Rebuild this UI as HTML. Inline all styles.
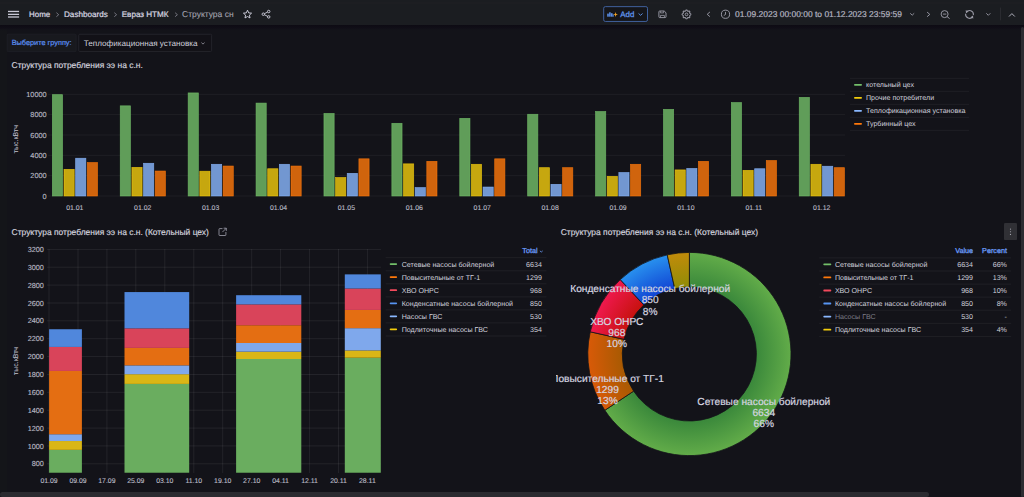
<!DOCTYPE html>
<html><head><meta charset="utf-8"><style>
html,body{margin:0;padding:0;width:1024px;height:497px;overflow:hidden;background:#131319;font-family:"Liberation Sans", sans-serif;}
.abs{position:absolute}
#top{position:absolute;left:0;top:0;width:1024px;height:25px;background:#1c1d21;}
</style></head><body>
<div class="abs" style="left:0;top:25px;width:7px;height:472px;background:#141519"></div>
<svg class="abs" style="left:0;top:0" width="1024" height="497" font-family='"Liberation Sans", sans-serif' text-rendering="geometricPrecision">
<defs><radialGradient id="g0" gradientUnits="userSpaceOnUse" cx="689.4" cy="354.0" r="101.6"><stop offset="0.659" stop-color="#3a883b"/><stop offset="1" stop-color="#62ac49"/></radialGradient><radialGradient id="g1" gradientUnits="userSpaceOnUse" cx="689.4" cy="354.0" r="101.6"><stop offset="0.659" stop-color="#a85a02"/><stop offset="1" stop-color="#d85a08"/></radialGradient><radialGradient id="g2" gradientUnits="userSpaceOnUse" cx="689.4" cy="354.0" r="101.6"><stop offset="0.659" stop-color="#c7120e"/><stop offset="1" stop-color="#ef194e"/></radialGradient><radialGradient id="g3" gradientUnits="userSpaceOnUse" cx="689.4" cy="354.0" r="101.6"><stop offset="0.659" stop-color="#1043d3"/><stop offset="1" stop-color="#2890ee"/></radialGradient><radialGradient id="g4" gradientUnits="userSpaceOnUse" cx="689.4" cy="354.0" r="101.6"><stop offset="0.659" stop-color="#918c07"/><stop offset="1" stop-color="#c18b0a"/></radialGradient><linearGradient id="shadowTop" x1="0" y1="0" x2="0" y2="1"><stop offset="0" stop-color="#0d0b13"/><stop offset="0.5" stop-color="#100e17"/><stop offset="1" stop-color="#131319" stop-opacity="0"/></linearGradient><clipPath id="clip3"><rect x="556" y="240" width="284" height="250"/></clipPath></defs>
<line x1="48" y1="196.0" x2="845" y2="196.0" stroke="#ffffff" stroke-opacity="0.05" stroke-width="1"/>
<text x="46.6" y="198.6" text-anchor="end" font-size="7.3" fill="#b9b9c4" stroke="#b9b9c4" stroke-width="0.12">0</text>
<line x1="48" y1="175.7" x2="845" y2="175.7" stroke="#ffffff" stroke-opacity="0.05" stroke-width="1"/>
<text x="46.6" y="178.3" text-anchor="end" font-size="7.3" fill="#b9b9c4" stroke="#b9b9c4" stroke-width="0.12">2000</text>
<line x1="48" y1="155.3" x2="845" y2="155.3" stroke="#ffffff" stroke-opacity="0.05" stroke-width="1"/>
<text x="46.6" y="157.9" text-anchor="end" font-size="7.3" fill="#b9b9c4" stroke="#b9b9c4" stroke-width="0.12">4000</text>
<line x1="48" y1="135.0" x2="845" y2="135.0" stroke="#ffffff" stroke-opacity="0.05" stroke-width="1"/>
<text x="46.6" y="137.6" text-anchor="end" font-size="7.3" fill="#b9b9c4" stroke="#b9b9c4" stroke-width="0.12">6000</text>
<line x1="48" y1="114.6" x2="845" y2="114.6" stroke="#ffffff" stroke-opacity="0.05" stroke-width="1"/>
<text x="46.6" y="117.2" text-anchor="end" font-size="7.3" fill="#b9b9c4" stroke="#b9b9c4" stroke-width="0.12">8000</text>
<line x1="48" y1="94.3" x2="845" y2="94.3" stroke="#ffffff" stroke-opacity="0.05" stroke-width="1"/>
<text x="46.6" y="96.9" text-anchor="end" font-size="7.3" fill="#b9b9c4" stroke="#b9b9c4" stroke-width="0.12">10000</text>
<text transform="translate(17.8,139.2) rotate(-90)" text-anchor="middle" font-size="7.0" fill="#b9b9c4" stroke="#b9b9c4" stroke-width="0.1">тыс.кВтч</text>
<rect x="52.35" y="94.65" width="10.2" height="101.35" fill="#609d59" stroke="#73bf69" stroke-width="0.7" stroke-opacity="0.8"/>
<rect x="64.00" y="169.35" width="10.2" height="26.65" fill="#c6a70f" stroke="#f2cc0c" stroke-width="0.7" stroke-opacity="0.8"/>
<rect x="75.65" y="158.25" width="10.2" height="37.75" fill="#7297d1" stroke="#8ab8ff" stroke-width="0.7" stroke-opacity="0.8"/>
<rect x="87.30" y="162.56" width="10.2" height="33.44" fill="#d0640d" stroke="#ff780a" stroke-width="0.7" stroke-opacity="0.8"/>
<text x="74.8" y="209.8" text-anchor="middle" font-size="6.9" fill="#b9b9c4" stroke="#b9b9c4" stroke-width="0.12">01.01</text>
<rect x="120.25" y="105.84" width="10.2" height="90.16" fill="#609d59" stroke="#73bf69" stroke-width="0.7" stroke-opacity="0.8"/>
<rect x="131.90" y="167.37" width="10.2" height="28.63" fill="#c6a70f" stroke="#f2cc0c" stroke-width="0.7" stroke-opacity="0.8"/>
<rect x="143.55" y="163.30" width="10.2" height="32.70" fill="#7297d1" stroke="#8ab8ff" stroke-width="0.7" stroke-opacity="0.8"/>
<rect x="155.20" y="171.03" width="10.2" height="24.97" fill="#d0640d" stroke="#ff780a" stroke-width="0.7" stroke-opacity="0.8"/>
<text x="142.7" y="209.8" text-anchor="middle" font-size="6.9" fill="#b9b9c4" stroke="#b9b9c4" stroke-width="0.12">01.02</text>
<rect x="188.15" y="92.92" width="10.2" height="103.08" fill="#609d59" stroke="#73bf69" stroke-width="0.7" stroke-opacity="0.8"/>
<rect x="199.80" y="171.23" width="10.2" height="24.77" fill="#c6a70f" stroke="#f2cc0c" stroke-width="0.7" stroke-opacity="0.8"/>
<rect x="211.45" y="164.31" width="10.2" height="31.69" fill="#7297d1" stroke="#8ab8ff" stroke-width="0.7" stroke-opacity="0.8"/>
<rect x="223.10" y="166.04" width="10.2" height="29.96" fill="#d0640d" stroke="#ff780a" stroke-width="0.7" stroke-opacity="0.8"/>
<text x="210.6" y="209.8" text-anchor="middle" font-size="6.9" fill="#b9b9c4" stroke="#b9b9c4" stroke-width="0.12">01.03</text>
<rect x="256.05" y="103.09" width="10.2" height="92.91" fill="#609d59" stroke="#73bf69" stroke-width="0.7" stroke-opacity="0.8"/>
<rect x="267.70" y="168.74" width="10.2" height="27.26" fill="#c6a70f" stroke="#f2cc0c" stroke-width="0.7" stroke-opacity="0.8"/>
<rect x="279.35" y="164.31" width="10.2" height="31.69" fill="#7297d1" stroke="#8ab8ff" stroke-width="0.7" stroke-opacity="0.8"/>
<rect x="291.00" y="166.04" width="10.2" height="29.96" fill="#d0640d" stroke="#ff780a" stroke-width="0.7" stroke-opacity="0.8"/>
<text x="278.5" y="209.8" text-anchor="middle" font-size="6.9" fill="#b9b9c4" stroke="#b9b9c4" stroke-width="0.12">01.04</text>
<rect x="323.95" y="113.46" width="10.2" height="82.54" fill="#609d59" stroke="#73bf69" stroke-width="0.7" stroke-opacity="0.8"/>
<rect x="335.60" y="177.54" width="10.2" height="18.46" fill="#c6a70f" stroke="#f2cc0c" stroke-width="0.7" stroke-opacity="0.8"/>
<rect x="347.25" y="173.37" width="10.2" height="22.63" fill="#7297d1" stroke="#8ab8ff" stroke-width="0.7" stroke-opacity="0.8"/>
<rect x="358.90" y="158.82" width="10.2" height="37.18" fill="#d0640d" stroke="#ff780a" stroke-width="0.7" stroke-opacity="0.8"/>
<text x="346.4" y="209.8" text-anchor="middle" font-size="6.9" fill="#b9b9c4" stroke="#b9b9c4" stroke-width="0.12">01.05</text>
<rect x="391.85" y="123.33" width="10.2" height="72.67" fill="#609d59" stroke="#73bf69" stroke-width="0.7" stroke-opacity="0.8"/>
<rect x="403.50" y="163.86" width="10.2" height="32.14" fill="#c6a70f" stroke="#f2cc0c" stroke-width="0.7" stroke-opacity="0.8"/>
<rect x="415.15" y="187.60" width="10.2" height="8.40" fill="#7297d1" stroke="#8ab8ff" stroke-width="0.7" stroke-opacity="0.8"/>
<rect x="426.80" y="161.37" width="10.2" height="34.63" fill="#d0640d" stroke="#ff780a" stroke-width="0.7" stroke-opacity="0.8"/>
<text x="414.3" y="209.8" text-anchor="middle" font-size="6.9" fill="#b9b9c4" stroke="#b9b9c4" stroke-width="0.12">01.06</text>
<rect x="459.75" y="118.35" width="10.2" height="77.65" fill="#609d59" stroke="#73bf69" stroke-width="0.7" stroke-opacity="0.8"/>
<rect x="471.40" y="164.31" width="10.2" height="31.69" fill="#c6a70f" stroke="#f2cc0c" stroke-width="0.7" stroke-opacity="0.8"/>
<rect x="483.05" y="187.04" width="10.2" height="8.96" fill="#7297d1" stroke="#8ab8ff" stroke-width="0.7" stroke-opacity="0.8"/>
<rect x="494.70" y="158.82" width="10.2" height="37.18" fill="#d0640d" stroke="#ff780a" stroke-width="0.7" stroke-opacity="0.8"/>
<text x="482.2" y="209.8" text-anchor="middle" font-size="6.9" fill="#b9b9c4" stroke="#b9b9c4" stroke-width="0.12">01.07</text>
<rect x="527.65" y="114.28" width="10.2" height="81.72" fill="#609d59" stroke="#73bf69" stroke-width="0.7" stroke-opacity="0.8"/>
<rect x="539.30" y="167.67" width="10.2" height="28.33" fill="#c6a70f" stroke="#f2cc0c" stroke-width="0.7" stroke-opacity="0.8"/>
<rect x="550.95" y="184.35" width="10.2" height="11.65" fill="#7297d1" stroke="#8ab8ff" stroke-width="0.7" stroke-opacity="0.8"/>
<rect x="562.60" y="167.67" width="10.2" height="28.33" fill="#d0640d" stroke="#ff780a" stroke-width="0.7" stroke-opacity="0.8"/>
<text x="550.1" y="209.8" text-anchor="middle" font-size="6.9" fill="#b9b9c4" stroke="#b9b9c4" stroke-width="0.12">01.08</text>
<rect x="595.55" y="111.53" width="10.2" height="84.47" fill="#609d59" stroke="#73bf69" stroke-width="0.7" stroke-opacity="0.8"/>
<rect x="607.20" y="176.37" width="10.2" height="19.63" fill="#c6a70f" stroke="#f2cc0c" stroke-width="0.7" stroke-opacity="0.8"/>
<rect x="618.85" y="172.55" width="10.2" height="23.45" fill="#7297d1" stroke="#8ab8ff" stroke-width="0.7" stroke-opacity="0.8"/>
<rect x="630.50" y="164.31" width="10.2" height="31.69" fill="#d0640d" stroke="#ff780a" stroke-width="0.7" stroke-opacity="0.8"/>
<text x="618.0" y="209.8" text-anchor="middle" font-size="6.9" fill="#b9b9c4" stroke="#b9b9c4" stroke-width="0.12">01.09</text>
<rect x="663.45" y="109.40" width="10.2" height="86.60" fill="#609d59" stroke="#73bf69" stroke-width="0.7" stroke-opacity="0.8"/>
<rect x="675.10" y="169.91" width="10.2" height="26.09" fill="#c6a70f" stroke="#f2cc0c" stroke-width="0.7" stroke-opacity="0.8"/>
<rect x="686.75" y="168.48" width="10.2" height="27.52" fill="#7297d1" stroke="#8ab8ff" stroke-width="0.7" stroke-opacity="0.8"/>
<rect x="698.40" y="161.37" width="10.2" height="34.63" fill="#d0640d" stroke="#ff780a" stroke-width="0.7" stroke-opacity="0.8"/>
<text x="685.9" y="209.8" text-anchor="middle" font-size="6.9" fill="#b9b9c4" stroke="#b9b9c4" stroke-width="0.12">01.10</text>
<rect x="731.35" y="102.58" width="10.2" height="93.42" fill="#609d59" stroke="#73bf69" stroke-width="0.7" stroke-opacity="0.8"/>
<rect x="743.00" y="170.37" width="10.2" height="25.63" fill="#c6a70f" stroke="#f2cc0c" stroke-width="0.7" stroke-opacity="0.8"/>
<rect x="754.65" y="168.74" width="10.2" height="27.26" fill="#7297d1" stroke="#8ab8ff" stroke-width="0.7" stroke-opacity="0.8"/>
<rect x="766.30" y="160.55" width="10.2" height="35.45" fill="#d0640d" stroke="#ff780a" stroke-width="0.7" stroke-opacity="0.8"/>
<text x="753.8" y="209.8" text-anchor="middle" font-size="6.9" fill="#b9b9c4" stroke="#b9b9c4" stroke-width="0.12">01.11</text>
<rect x="799.25" y="97.40" width="10.2" height="98.60" fill="#609d59" stroke="#73bf69" stroke-width="0.7" stroke-opacity="0.8"/>
<rect x="810.90" y="164.31" width="10.2" height="31.69" fill="#c6a70f" stroke="#f2cc0c" stroke-width="0.7" stroke-opacity="0.8"/>
<rect x="822.55" y="166.25" width="10.2" height="29.75" fill="#7297d1" stroke="#8ab8ff" stroke-width="0.7" stroke-opacity="0.8"/>
<rect x="834.20" y="167.67" width="10.2" height="28.33" fill="#d0640d" stroke="#ff780a" stroke-width="0.7" stroke-opacity="0.8"/>
<text x="821.7" y="209.8" text-anchor="middle" font-size="6.9" fill="#b9b9c4" stroke="#b9b9c4" stroke-width="0.12">01.12</text>
<line x1="850" y1="78.3" x2="969" y2="78.3" stroke="#ffffff" stroke-opacity="0.05"/>
<rect x="854" y="83.9" width="8" height="1.8" rx="0.9" fill="#73bf69"/>
<text x="866" y="87.3" font-size="7.1" fill="#d0d0dc">котельный цех</text>
<line x1="850" y1="91.3" x2="969" y2="91.3" stroke="#ffffff" stroke-opacity="0.05"/>
<rect x="854" y="96.9" width="8" height="1.8" rx="0.9" fill="#f2cc0c"/>
<text x="866" y="100.3" font-size="7.1" fill="#d0d0dc">Прочие потребители</text>
<line x1="850" y1="104.3" x2="969" y2="104.3" stroke="#ffffff" stroke-opacity="0.05"/>
<rect x="854" y="109.9" width="8" height="1.8" rx="0.9" fill="#8ab8ff"/>
<text x="866" y="113.3" font-size="7.1" fill="#d0d0dc">Теплофикационная установка</text>
<line x1="850" y1="117.3" x2="969" y2="117.3" stroke="#ffffff" stroke-opacity="0.05"/>
<rect x="854" y="122.9" width="8" height="1.8" rx="0.9" fill="#ff780a"/>
<text x="866" y="126.3" font-size="7.1" fill="#d0d0dc">Турбинный цех</text>
<line x1="850" y1="130.3" x2="969" y2="130.3" stroke="#ffffff" stroke-opacity="0.05"/>
<line x1="47" y1="463.8" x2="381" y2="463.8" stroke="#ffffff" stroke-opacity="0.07"/>
<text x="43.9" y="466.4" text-anchor="end" font-size="7.3" fill="#b9b9c4" stroke="#b9b9c4" stroke-width="0.12">800</text>
<line x1="47" y1="445.9" x2="381" y2="445.9" stroke="#ffffff" stroke-opacity="0.07"/>
<text x="43.9" y="448.5" text-anchor="end" font-size="7.3" fill="#b9b9c4" stroke="#b9b9c4" stroke-width="0.12">1000</text>
<line x1="47" y1="428.1" x2="381" y2="428.1" stroke="#ffffff" stroke-opacity="0.07"/>
<text x="43.9" y="430.7" text-anchor="end" font-size="7.3" fill="#b9b9c4" stroke="#b9b9c4" stroke-width="0.12">1200</text>
<line x1="47" y1="410.2" x2="381" y2="410.2" stroke="#ffffff" stroke-opacity="0.07"/>
<text x="43.9" y="412.8" text-anchor="end" font-size="7.3" fill="#b9b9c4" stroke="#b9b9c4" stroke-width="0.12">1400</text>
<line x1="47" y1="392.3" x2="381" y2="392.3" stroke="#ffffff" stroke-opacity="0.07"/>
<text x="43.9" y="394.9" text-anchor="end" font-size="7.3" fill="#b9b9c4" stroke="#b9b9c4" stroke-width="0.12">1600</text>
<line x1="47" y1="374.5" x2="381" y2="374.5" stroke="#ffffff" stroke-opacity="0.07"/>
<text x="43.9" y="377.1" text-anchor="end" font-size="7.3" fill="#b9b9c4" stroke="#b9b9c4" stroke-width="0.12">1800</text>
<line x1="47" y1="356.6" x2="381" y2="356.6" stroke="#ffffff" stroke-opacity="0.07"/>
<text x="43.9" y="359.2" text-anchor="end" font-size="7.3" fill="#b9b9c4" stroke="#b9b9c4" stroke-width="0.12">2000</text>
<line x1="47" y1="338.7" x2="381" y2="338.7" stroke="#ffffff" stroke-opacity="0.07"/>
<text x="43.9" y="341.3" text-anchor="end" font-size="7.3" fill="#b9b9c4" stroke="#b9b9c4" stroke-width="0.12">2200</text>
<line x1="47" y1="320.8" x2="381" y2="320.8" stroke="#ffffff" stroke-opacity="0.07"/>
<text x="43.9" y="323.4" text-anchor="end" font-size="7.3" fill="#b9b9c4" stroke="#b9b9c4" stroke-width="0.12">2400</text>
<line x1="47" y1="303.0" x2="381" y2="303.0" stroke="#ffffff" stroke-opacity="0.07"/>
<text x="43.9" y="305.6" text-anchor="end" font-size="7.3" fill="#b9b9c4" stroke="#b9b9c4" stroke-width="0.12">2600</text>
<line x1="47" y1="285.1" x2="381" y2="285.1" stroke="#ffffff" stroke-opacity="0.07"/>
<text x="43.9" y="287.7" text-anchor="end" font-size="7.3" fill="#b9b9c4" stroke="#b9b9c4" stroke-width="0.12">2800</text>
<line x1="47" y1="267.2" x2="381" y2="267.2" stroke="#ffffff" stroke-opacity="0.07"/>
<text x="43.9" y="269.8" text-anchor="end" font-size="7.3" fill="#b9b9c4" stroke="#b9b9c4" stroke-width="0.12">3000</text>
<line x1="47" y1="249.4" x2="381" y2="249.4" stroke="#ffffff" stroke-opacity="0.07"/>
<text x="43.9" y="252.0" text-anchor="end" font-size="7.3" fill="#b9b9c4" stroke="#b9b9c4" stroke-width="0.12">3200</text>
<line x1="49.0" y1="249" x2="49.0" y2="473" stroke="#ffffff" stroke-opacity="0.07"/>
<line x1="78.0" y1="249" x2="78.0" y2="473" stroke="#ffffff" stroke-opacity="0.07"/>
<line x1="106.9" y1="249" x2="106.9" y2="473" stroke="#ffffff" stroke-opacity="0.07"/>
<line x1="135.8" y1="249" x2="135.8" y2="473" stroke="#ffffff" stroke-opacity="0.07"/>
<line x1="164.8" y1="249" x2="164.8" y2="473" stroke="#ffffff" stroke-opacity="0.07"/>
<line x1="193.8" y1="249" x2="193.8" y2="473" stroke="#ffffff" stroke-opacity="0.07"/>
<line x1="222.7" y1="249" x2="222.7" y2="473" stroke="#ffffff" stroke-opacity="0.07"/>
<line x1="251.7" y1="249" x2="251.7" y2="473" stroke="#ffffff" stroke-opacity="0.07"/>
<line x1="280.6" y1="249" x2="280.6" y2="473" stroke="#ffffff" stroke-opacity="0.07"/>
<line x1="309.6" y1="249" x2="309.6" y2="473" stroke="#ffffff" stroke-opacity="0.07"/>
<line x1="338.5" y1="249" x2="338.5" y2="473" stroke="#ffffff" stroke-opacity="0.07"/>
<line x1="367.4" y1="249" x2="367.4" y2="473" stroke="#ffffff" stroke-opacity="0.07"/>
<text transform="translate(17.8,361) rotate(-90)" text-anchor="middle" font-size="7.0" fill="#b9b9c4" stroke="#b9b9c4" stroke-width="0.1">тыс.кВтч</text>
<rect x="49.1" y="449.86" width="32.8" height="22.87" fill="#6aad5f"/>
<rect x="49.1" y="441.02" width="32.8" height="8.85" fill="#dab616"/>
<rect x="49.1" y="434.23" width="32.8" height="6.79" fill="#7fa8ec"/>
<rect x="49.1" y="370.97" width="32.8" height="63.26" fill="#e46e12"/>
<rect x="49.1" y="346.93" width="32.8" height="24.04" fill="#d9445a"/>
<rect x="49.1" y="329.24" width="32.8" height="17.69" fill="#5087dc"/>
<rect x="124.5" y="383.92" width="64.7" height="88.81" fill="#6aad5f"/>
<rect x="124.5" y="374.18" width="64.7" height="9.74" fill="#dab616"/>
<rect x="124.5" y="365.34" width="64.7" height="8.85" fill="#7fa8ec"/>
<rect x="124.5" y="347.91" width="64.7" height="17.42" fill="#e46e12"/>
<rect x="124.5" y="328.35" width="64.7" height="19.57" fill="#d9445a"/>
<rect x="124.5" y="292.07" width="64.7" height="36.28" fill="#5087dc"/>
<rect x="236.1" y="358.99" width="65.2" height="113.74" fill="#6aad5f"/>
<rect x="236.1" y="351.67" width="65.2" height="7.33" fill="#dab616"/>
<rect x="236.1" y="343.00" width="65.2" height="8.67" fill="#7fa8ec"/>
<rect x="236.1" y="325.22" width="65.2" height="17.78" fill="#e46e12"/>
<rect x="236.1" y="304.40" width="65.2" height="20.82" fill="#d9445a"/>
<rect x="236.1" y="295.20" width="65.2" height="9.20" fill="#5087dc"/>
<rect x="344.8" y="357.74" width="36.0" height="114.99" fill="#6aad5f"/>
<rect x="344.8" y="350.41" width="36.0" height="7.33" fill="#dab616"/>
<rect x="344.8" y="328.17" width="36.0" height="22.25" fill="#7fa8ec"/>
<rect x="344.8" y="309.94" width="36.0" height="18.23" fill="#e46e12"/>
<rect x="344.8" y="288.50" width="36.0" height="21.44" fill="#d9445a"/>
<rect x="344.8" y="274.38" width="36.0" height="14.12" fill="#5087dc"/>
<text x="49.0" y="483.2" text-anchor="middle" font-size="6.9" fill="#b9b9c4" stroke="#b9b9c4" stroke-width="0.12">01.09</text>
<text x="78.0" y="483.2" text-anchor="middle" font-size="6.9" fill="#b9b9c4" stroke="#b9b9c4" stroke-width="0.12">09.09</text>
<text x="106.9" y="483.2" text-anchor="middle" font-size="6.9" fill="#b9b9c4" stroke="#b9b9c4" stroke-width="0.12">17.09</text>
<text x="135.8" y="483.2" text-anchor="middle" font-size="6.9" fill="#b9b9c4" stroke="#b9b9c4" stroke-width="0.12">25.09</text>
<text x="164.8" y="483.2" text-anchor="middle" font-size="6.9" fill="#b9b9c4" stroke="#b9b9c4" stroke-width="0.12">03.10</text>
<text x="193.8" y="483.2" text-anchor="middle" font-size="6.9" fill="#b9b9c4" stroke="#b9b9c4" stroke-width="0.12">11.10</text>
<text x="222.7" y="483.2" text-anchor="middle" font-size="6.9" fill="#b9b9c4" stroke="#b9b9c4" stroke-width="0.12">19.10</text>
<text x="251.7" y="483.2" text-anchor="middle" font-size="6.9" fill="#b9b9c4" stroke="#b9b9c4" stroke-width="0.12">27.10</text>
<text x="280.6" y="483.2" text-anchor="middle" font-size="6.9" fill="#b9b9c4" stroke="#b9b9c4" stroke-width="0.12">04.11</text>
<text x="309.6" y="483.2" text-anchor="middle" font-size="6.9" fill="#b9b9c4" stroke="#b9b9c4" stroke-width="0.12">12.11</text>
<text x="338.5" y="483.2" text-anchor="middle" font-size="6.9" fill="#b9b9c4" stroke="#b9b9c4" stroke-width="0.12">20.11</text>
<text x="367.4" y="483.2" text-anchor="middle" font-size="6.9" fill="#b9b9c4" stroke="#b9b9c4" stroke-width="0.12">28.11</text>
<text x="537.5" y="253" text-anchor="end" font-size="7.2" fill="#6a9af8" stroke="#6a9af8" stroke-width="0.3">Total</text><path d="M539.9,250.9 L541.3,252 L542.7,250.9" fill="none" stroke="#6a9af8" stroke-width="0.8"/>
<line x1="385.6" y1="257.7" x2="546.5" y2="257.7" stroke="#ffffff" stroke-opacity="0.055"/>
<rect x="389.7" y="263.2" width="7.4" height="1.8" rx="0.9" fill="#73bf69"/>
<text x="401.7" y="266.7" font-size="7.1" fill="#d0d0dc">Сетевые насосы бойлерной</text>
<text x="541.9" y="266.7" text-anchor="end" font-size="7.1" fill="#d0d0dc">6634</text>
<line x1="385.6" y1="270.8" x2="546.5" y2="270.8" stroke="#ffffff" stroke-opacity="0.055"/>
<rect x="389.7" y="276.2" width="7.4" height="1.8" rx="0.9" fill="#ff780a"/>
<text x="401.7" y="279.8" font-size="7.1" fill="#d0d0dc">Повысительные от ТГ-1</text>
<text x="541.9" y="279.8" text-anchor="end" font-size="7.1" fill="#d0d0dc">1299</text>
<line x1="385.6" y1="283.8" x2="546.5" y2="283.8" stroke="#ffffff" stroke-opacity="0.055"/>
<rect x="389.7" y="289.3" width="7.4" height="1.8" rx="0.9" fill="#f2495c"/>
<text x="401.7" y="292.8" font-size="7.1" fill="#d0d0dc">ХВО ОНРС</text>
<text x="541.9" y="292.8" text-anchor="end" font-size="7.1" fill="#d0d0dc">968</text>
<line x1="385.6" y1="296.9" x2="546.5" y2="296.9" stroke="#ffffff" stroke-opacity="0.055"/>
<rect x="389.7" y="302.4" width="7.4" height="1.8" rx="0.9" fill="#5794f2"/>
<text x="401.7" y="305.9" font-size="7.1" fill="#d0d0dc">Конденсатные насосы бойлерной</text>
<text x="541.9" y="305.9" text-anchor="end" font-size="7.1" fill="#d0d0dc">850</text>
<line x1="385.6" y1="309.9" x2="546.5" y2="309.9" stroke="#ffffff" stroke-opacity="0.055"/>
<rect x="389.7" y="315.4" width="7.4" height="1.8" rx="0.9" fill="#8ab8ff"/>
<text x="401.7" y="318.9" font-size="7.1" fill="#d0d0dc">Насосы ГВС</text>
<text x="541.9" y="318.9" text-anchor="end" font-size="7.1" fill="#d0d0dc">530</text>
<line x1="385.6" y1="322.9" x2="546.5" y2="322.9" stroke="#ffffff" stroke-opacity="0.055"/>
<rect x="389.7" y="328.4" width="7.4" height="1.8" rx="0.9" fill="#f2cc0c"/>
<text x="401.7" y="331.9" font-size="7.1" fill="#d0d0dc">Подлиточные насосы ГВС</text>
<text x="541.9" y="331.9" text-anchor="end" font-size="7.1" fill="#d0d0dc">354</text>
<line x1="385.6" y1="336" x2="546.5" y2="336" stroke="#ffffff" stroke-opacity="0.055"/>
<path d="M689.40,252.40 A101.6,101.6 0 1 1 604.83,410.31 L633.63,391.13 A67.0,67.0 0 1 0 689.40,287.00 Z" fill="url(#g0)" stroke="#131419" stroke-width="0.8"/>
<path d="M604.83,410.31 A101.6,101.6 0 0 1 590.25,331.80 L624.02,339.36 A67.0,67.0 0 0 0 633.63,391.13 Z" fill="url(#g1)" stroke="#131419" stroke-width="0.8"/>
<path d="M590.25,331.80 A101.6,101.6 0 0 1 620.25,279.57 L643.80,304.91 A67.0,67.0 0 0 0 624.02,339.36 Z" fill="url(#g2)" stroke="#131419" stroke-width="0.8"/>
<path d="M620.25,279.57 A101.6,101.6 0 0 1 667.22,254.85 L674.77,288.62 A67.0,67.0 0 0 0 643.80,304.91 Z" fill="url(#g3)" stroke="#131419" stroke-width="0.8"/>
<path d="M667.22,254.85 A101.6,101.6 0 0 1 689.40,252.40 L689.40,287.00 A67.0,67.0 0 0 0 674.77,288.62 Z" fill="url(#g4)" stroke="#131419" stroke-width="0.8"/>
<g clip-path="url(#clip3)">
<text x="650.2" y="292.1" text-anchor="middle" font-size="10.2" fill="#d6d6e0" stroke="#d6d6e0" stroke-width="0.18">Конденсатные насосы бойлерной</text>
<text x="650.2" y="303.3" text-anchor="middle" font-size="10.2" fill="#d6d6e0" stroke="#d6d6e0" stroke-width="0.18">850</text>
<text x="650.2" y="314.5" text-anchor="middle" font-size="10.2" fill="#d6d6e0" stroke="#d6d6e0" stroke-width="0.18">8%</text>
<text x="616.8" y="324.7" text-anchor="middle" font-size="10.2" fill="#d6d6e0" stroke="#d6d6e0" stroke-width="0.18">ХВО ОНРС</text>
<text x="616.8" y="335.9" text-anchor="middle" font-size="10.2" fill="#d6d6e0" stroke="#d6d6e0" stroke-width="0.18">968</text>
<text x="616.8" y="347.1" text-anchor="middle" font-size="10.2" fill="#d6d6e0" stroke="#d6d6e0" stroke-width="0.18">10%</text>
<text x="607.5" y="381.8" text-anchor="middle" font-size="10.2" fill="#d6d6e0" stroke="#d6d6e0" stroke-width="0.18">Повысительные от ТГ-1</text>
<text x="607.5" y="393.0" text-anchor="middle" font-size="10.2" fill="#d6d6e0" stroke="#d6d6e0" stroke-width="0.18">1299</text>
<text x="607.5" y="404.2" text-anchor="middle" font-size="10.2" fill="#d6d6e0" stroke="#d6d6e0" stroke-width="0.18">13%</text>
<text x="763.8" y="404.7" text-anchor="middle" font-size="10.2" fill="#d6d6e0" stroke="#d6d6e0" stroke-width="0.18">Сетевые насосы бойлерной</text>
<text x="763.8" y="415.9" text-anchor="middle" font-size="10.2" fill="#d6d6e0" stroke="#d6d6e0" stroke-width="0.18">6634</text>
<text x="763.8" y="427.1" text-anchor="middle" font-size="10.2" fill="#d6d6e0" stroke="#d6d6e0" stroke-width="0.18">66%</text>
</g>
<text x="973" y="253.4" text-anchor="end" font-size="7.2" fill="#6a9af8" stroke="#6a9af8" stroke-width="0.3">Value</text>
<text x="1006.9" y="253.4" text-anchor="end" font-size="7.2" fill="#6a9af8" stroke="#6a9af8" stroke-width="0.3">Percent</text>
<line x1="819.2" y1="257.9" x2="1011.2" y2="257.9" stroke="#ffffff" stroke-opacity="0.055"/>
<rect x="823.3" y="263.4" width="8" height="1.8" rx="0.9" fill="#73bf69"/>
<text x="834.9" y="266.9" font-size="7.1" fill="#d0d0dc">Сетевые насосы бойлерной</text>
<text x="973" y="266.9" text-anchor="end" font-size="7.1" fill="#d0d0dc">6634</text>
<text x="1006.9" y="266.9" text-anchor="end" font-size="7.1" fill="#d0d0dc">66%</text>
<line x1="819.2" y1="271.0" x2="1011.2" y2="271.0" stroke="#ffffff" stroke-opacity="0.055"/>
<rect x="823.3" y="276.5" width="8" height="1.8" rx="0.9" fill="#ff780a"/>
<text x="834.9" y="280.0" font-size="7.1" fill="#d0d0dc">Повысительные от ТГ-1</text>
<text x="973" y="280.0" text-anchor="end" font-size="7.1" fill="#d0d0dc">1299</text>
<text x="1006.9" y="280.0" text-anchor="end" font-size="7.1" fill="#d0d0dc">13%</text>
<line x1="819.2" y1="284.1" x2="1011.2" y2="284.1" stroke="#ffffff" stroke-opacity="0.055"/>
<rect x="823.3" y="289.6" width="8" height="1.8" rx="0.9" fill="#f2495c"/>
<text x="834.9" y="293.1" font-size="7.1" fill="#d0d0dc">ХВО ОНРС</text>
<text x="973" y="293.1" text-anchor="end" font-size="7.1" fill="#d0d0dc">968</text>
<text x="1006.9" y="293.1" text-anchor="end" font-size="7.1" fill="#d0d0dc">10%</text>
<line x1="819.2" y1="297.1" x2="1011.2" y2="297.1" stroke="#ffffff" stroke-opacity="0.055"/>
<rect x="823.3" y="302.6" width="8" height="1.8" rx="0.9" fill="#5794f2"/>
<text x="834.9" y="306.1" font-size="7.1" fill="#d0d0dc">Конденсатные насосы бойлерной</text>
<text x="973" y="306.1" text-anchor="end" font-size="7.1" fill="#d0d0dc">850</text>
<text x="1006.9" y="306.1" text-anchor="end" font-size="7.1" fill="#d0d0dc">8%</text>
<line x1="819.2" y1="310.2" x2="1011.2" y2="310.2" stroke="#ffffff" stroke-opacity="0.055"/>
<rect x="823.3" y="315.7" width="8" height="1.8" rx="0.9" fill="#8ab8ff"/>
<text x="834.9" y="319.2" font-size="7.1" fill="#7c7c86">Насосы ГВС</text>
<text x="973" y="319.2" text-anchor="end" font-size="7.1" fill="#d0d0dc">530</text>
<text x="1006.9" y="319.2" text-anchor="end" font-size="7.1" fill="#d0d0dc">-</text>
<line x1="819.2" y1="323.3" x2="1011.2" y2="323.3" stroke="#ffffff" stroke-opacity="0.055"/>
<rect x="823.3" y="328.8" width="8" height="1.8" rx="0.9" fill="#f2cc0c"/>
<text x="834.9" y="332.3" font-size="7.1" fill="#d0d0dc">Подлиточные насосы ГВС</text>
<text x="973" y="332.3" text-anchor="end" font-size="7.1" fill="#d0d0dc">354</text>
<text x="1006.9" y="332.3" text-anchor="end" font-size="7.1" fill="#d0d0dc">4%</text>
<line x1="819.2" y1="336.4" x2="1011.2" y2="336.4" stroke="#ffffff" stroke-opacity="0.055"/>
<text x="11.6" y="68" font-size="8.45" fill="#d0d0dc" stroke="#d0d0dc" stroke-width="0.18">Структура потребления ээ на с.н.</text>
<text x="11.6" y="234.6" font-size="8.45" fill="#d0d0dc" stroke="#d0d0dc" stroke-width="0.18">Структура потребления ээ на с.н. (Котельный цех)</text>
<text x="560.7" y="234.6" font-size="8.45" fill="#d0d0dc" stroke="#d0d0dc" stroke-width="0.18">Структура потребления ээ на с.н. (Котельный цех)</text>
<rect x="0" y="0" width="1024" height="25" fill="#1b1d21"/><rect x="0" y="2.2" width="1024" height="1.6" fill="#1e2024"/><rect x="0" y="25" width="1024" height="6" fill="url(#shadowTop)"/>
<line x1="8.0" y1="11.45" x2="19.1" y2="11.45" stroke="#c8c8d6" stroke-width="1.3"/>
<line x1="8.0" y1="14.35" x2="19.1" y2="14.35" stroke="#c8c8d6" stroke-width="1.3"/>
<line x1="8.0" y1="17.0" x2="19.1" y2="17.0" stroke="#c8c8d6" stroke-width="1.3"/>
<text x="29.1" y="16.9" font-size="7.95" fill="#d6d6e0" stroke="#d6d6e0" stroke-width="0.22">Home</text>
<path d="M56.4,12.7 L58.7,14.7 L56.4,16.7" fill="none" stroke="#8a8a96" stroke-width="0.8"/>
<text x="64" y="16.9" font-size="8.15" fill="#d6d6e0" stroke="#d6d6e0" stroke-width="0.22">Dashboards</text>
<path d="M114.3,12.7 L116.6,14.7 L114.3,16.7" fill="none" stroke="#8a8a96" stroke-width="0.8"/>
<text x="121.7" y="16.9" font-size="8.1" fill="#d6d6e0" stroke="#d6d6e0" stroke-width="0.22">Евраз НТМК</text>
<path d="M175.1,12.7 L177.4,14.7 L175.1,16.7" fill="none" stroke="#8a8a96" stroke-width="0.8"/>
<svg x="0" y="0" width="234.2" height="25"><text x="182" y="16.9" font-size="8.5" fill="#a4a4b0" stroke="#a4a4b0" stroke-width="0.1">Структура сн</text></svg>
<polygon points="247.50,10.20 248.68,12.88 251.59,13.17 249.40,15.12 250.03,17.98 247.50,16.50 244.97,17.98 245.60,15.12 243.41,13.17 246.32,12.88" fill="none" stroke="#cfcfdc" stroke-width="0.95" stroke-linejoin="round"/>
<g fill="none" stroke="#cfcfdc" stroke-width="0.9"><circle cx="268.7" cy="11.5" r="1.25"/><circle cx="263.3" cy="14.2" r="1.25"/><circle cx="268.7" cy="16.9" r="1.25"/><line x1="264.5" y1="13.6" x2="267.5" y2="12.1"/><line x1="264.5" y1="14.8" x2="267.5" y2="16.3"/></g>
<rect x="603.7" y="6.65" width="43.8" height="14.8" rx="1.6" fill="#15161a" stroke="#40619e" stroke-width="1"/>
<g fill="#5a8de6"><rect x="607.2" y="13.6" width="1.6" height="3.1"/><rect x="609.1" y="12.3" width="1.6" height="4.4"/><rect x="611" y="13.2" width="1.6" height="3.5"/><rect x="612.6" y="14.4" width="1.1" height="2.3"/></g>
<path d="M615.6,11.9 L616.2,13.9 L618,14.5 L616.2,15.1 L615.6,17.1 L615,15.1 L613.2,14.5 L615,13.9 Z" fill="#f5a524"/>
<text x="620.3" y="16.9" font-size="7.9" fill="#6196ee" stroke="#6196ee" stroke-width="0.25">Add</text>
<path d="M638.6,13.5 L640.6,15.3 L642.6,13.5" fill="none" stroke="#6196ee" stroke-width="0.9"/>
<path d="M658.9,11.8 Q658.9,11 659.7,11 L664.2,11 L666,12.8 L666,16.8 Q666,17.6 665.2,17.6 L659.7,17.6 Q658.9,17.6 658.9,16.8 Z" fill="none" stroke="#9a9aa6" stroke-width="0.95"/>
<path d="M660.4,11.2 L660.4,12.9 L663.6,12.9 L663.6,11.2" fill="none" stroke="#9a9aa6" stroke-width="0.8"/><path d="M660.4,17.4 L660.4,15.4 L664.4,15.4 L664.4,17.4" fill="none" stroke="#9a9aa6" stroke-width="0.8"/>
<polyline points="690.95,14.40 690.87,14.69 690.66,14.95 690.37,15.17 690.07,15.36 689.83,15.53 689.69,15.72 689.65,15.96 689.70,16.25 689.78,16.59 689.83,16.96 689.80,17.29 689.65,17.55 689.39,17.70 689.06,17.73 688.69,17.68 688.35,17.60 688.06,17.55 687.82,17.59 687.63,17.73 687.46,17.97 687.27,18.27 687.05,18.56 686.79,18.77 686.50,18.85 686.21,18.77 685.95,18.56 685.73,18.27 685.54,17.97 685.37,17.73 685.18,17.59 684.94,17.55 684.65,17.60 684.31,17.68 683.94,17.73 683.61,17.70 683.35,17.55 683.20,17.29 683.17,16.96 683.22,16.59 683.30,16.25 683.35,15.96 683.31,15.72 683.17,15.53 682.93,15.36 682.63,15.17 682.34,14.95 682.13,14.69 682.05,14.40 682.13,14.11 682.34,13.85 682.63,13.63 682.93,13.44 683.17,13.27 683.31,13.08 683.35,12.84 683.30,12.55 683.22,12.21 683.17,11.84 683.20,11.51 683.35,11.25 683.61,11.10 683.94,11.07 684.31,11.12 684.65,11.20 684.94,11.25 685.18,11.21 685.37,11.07 685.54,10.83 685.73,10.53 685.95,10.24 686.21,10.03 686.50,9.95 686.79,10.03 687.05,10.24 687.27,10.53 687.46,10.83 687.63,11.07 687.82,11.21 688.06,11.25 688.35,11.20 688.69,11.12 689.06,11.07 689.39,11.10 689.65,11.25 689.80,11.51 689.83,11.84 689.78,12.21 689.70,12.55 689.65,12.84 689.69,13.08 689.83,13.27 690.07,13.44 690.37,13.63 690.66,13.85 690.87,14.11 690.95,14.40" fill="none" stroke="#9a9aa6" stroke-width="1.05" stroke-linejoin="round"/><circle cx="686.5" cy="14.4" r="1.35" fill="none" stroke="#9a9aa6" stroke-width="1"/>
<path d="M709.9,12 L707.2,14.3 L709.9,16.6" fill="none" stroke="#9a9aa6" stroke-width="0.95"/>
<circle cx="725.5" cy="14.25" r="4.1" fill="none" stroke="#9a9aa6" stroke-width="0.95"/><path d="M725.5,11.9 L725.5,14.5 L723.8,15.5" fill="none" stroke="#9a9aa6" stroke-width="0.9"/>
<text x="735" y="16.9" font-size="8.4" fill="#b4b4c0" stroke="#b4b4c0" stroke-width="0.2" textLength="167" lengthAdjust="spacingAndGlyphs">01.09.2023 00:00:00 to 01.12.2023 23:59:59</text>
<path d="M910.2,13.3 L912.2,15.2 L914.2,13.3" fill="none" stroke="#9a9aa6" stroke-width="0.9"/>
<path d="M927.1,12.1 L929.8,14.4 L927.1,16.7" fill="none" stroke="#9a9aa6" stroke-width="0.95"/>
<circle cx="944.6" cy="14.1" r="3.5" fill="none" stroke="#9a9aa6" stroke-width="0.95"/><line x1="942.9" y1="14.1" x2="946.3" y2="14.1" stroke="#9a9aa6" stroke-width="0.9"/><line x1="947.2" y1="16.7" x2="949.6" y2="18.6" stroke="#9a9aa6" stroke-width="1"/>
<g fill="none" stroke="#9a9aa6" stroke-width="1.05" stroke-linecap="round"><path d="M966.31,12.16 A3.9,3.9 0 0 1 973.39,14.74"/><path d="M972.69,16.64 A3.9,3.9 0 0 1 965.61,14.06"/></g><path d="M965.6,10.2 L968.6,11.2 L966.2,13.2 Z" fill="#9a9aa6"/><path d="M973.4,18.6 L970.4,17.6 L972.8,15.6 Z" fill="#9a9aa6"/>
<path d="M986.3,13.3 L988.3,15.3 L990.3,13.3" fill="none" stroke="#9a9aa6" stroke-width="0.9"/>
<line x1="1000.5" y1="7.6" x2="1000.5" y2="20.3" stroke="#2a2b30" stroke-width="1"/>
<path d="M1009,16.5 L1011.9,13.6 L1014.8,16.5" fill="none" stroke="#b0b0bc" stroke-width="1"/>
<rect x="7.2" y="34.2" width="68.9" height="17.4" rx="1" fill="#18191e" stroke="#202127" stroke-width="0.8"/>
<text x="11.7" y="44.8" font-size="7.34" fill="#5b8ef0" stroke="#5b8ef0" stroke-width="0.2">Выберите группу:</text>
<rect x="78.75" y="34.25" width="132.9" height="17.2" rx="1" fill="#121117" stroke="#26262c" stroke-width="0.9"/>
<text x="83.75" y="46.1" font-size="8.15" fill="#d0d0dc">Теплофикационная установка</text>
<path d="M201.4,42.6 L203,44.1 L204.6,42.6" fill="none" stroke="#9a9aa6" stroke-width="0.8"/>
<path d="M222.5,228.6 L219.6,228.6 Q219,228.6 219,229.2 L219,234.9 Q219,235.5 219.6,235.5 L225.3,235.5 Q225.9,235.5 225.9,234.9 L225.9,232" fill="none" stroke="#9a9aa6" stroke-width="0.85"/><path d="M223.6,228.2 L226.3,228.2 L226.3,230.9 M226.3,228.2 L222.4,232.1" fill="none" stroke="#9a9aa6" stroke-width="0.85"/>
<rect x="1004" y="223.1" width="13" height="17" rx="1.2" fill="#303035"/>
<g fill="#a8a8b2"><circle cx="1010.5" cy="229.1" r="0.6"/><circle cx="1010.5" cy="231.75" r="0.6"/><circle cx="1010.5" cy="234.4" r="0.6"/></g>
<rect x="1021" y="27" width="3" height="470" rx="1.5" fill="#2c2c31"/>
<rect x="0" y="492" width="929" height="5" rx="2.5" fill="#2b2b30"/>
</svg>
</body></html>
